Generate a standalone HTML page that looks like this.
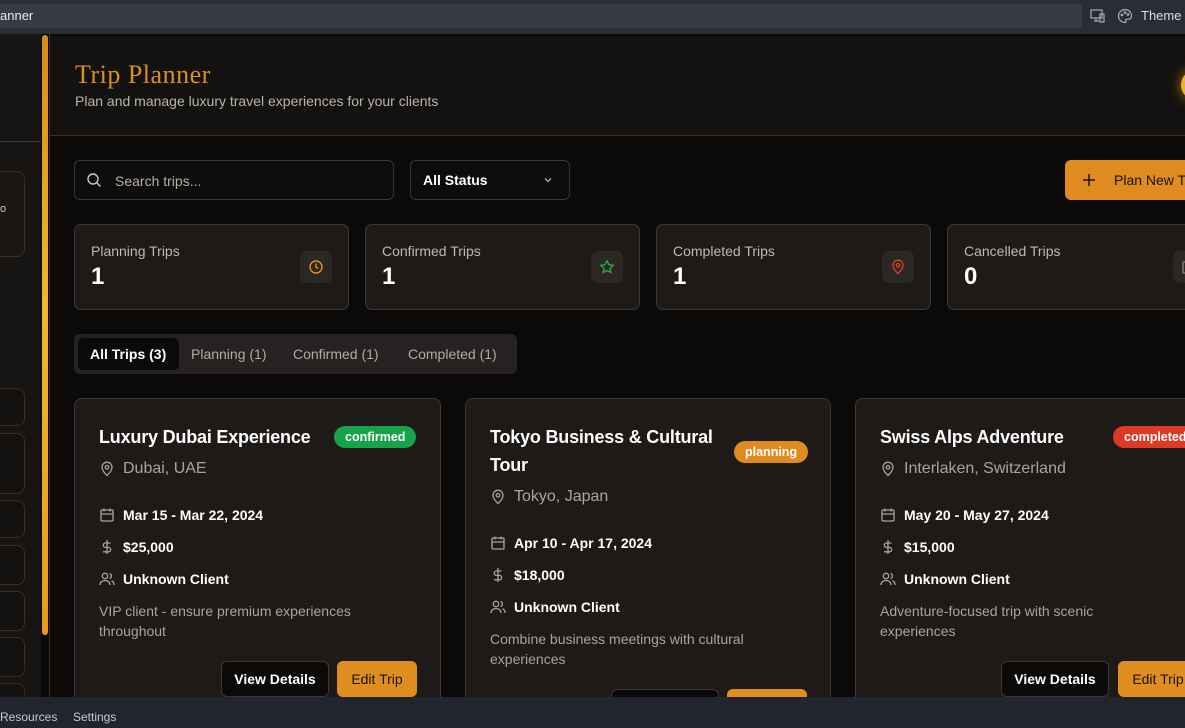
<!DOCTYPE html>
<html><head><meta charset="utf-8"><style>
*{box-sizing:border-box;margin:0;padding:0}
body{width:1185px;height:728px;overflow:hidden;background:#0b0a09;font-family:"Liberation Sans",Arial,sans-serif;position:relative;color:#fff}
.a{position:absolute;white-space:nowrap}
.topbar{left:0;top:0;width:1185px;height:34px;background:#2a2d35}
.field{left:0;top:4px;width:1082px;height:24px;background:#383b45;border-radius:0 4px 4px 0;font-size:13px;color:#e8e8e8;line-height:24px;padding-left:0}
.side{left:0;top:34px;width:41px;height:663px;background:#171513}
.sb{border:1px solid #3c2e1a;border-left:none;border-radius:0 8px 8px 0;background:#141210;left:0;width:25px}
.scroll{left:42px;top:35px;width:6px;height:600px;border-radius:3px;background:linear-gradient(#d98a1a,#f0b730 45%,#e8981e)}
.main{left:49px;top:34px;width:1136px;height:663px;border-left:1px solid #3a2d1c}
.header{left:50px;top:36px;width:1135px;height:100px;background:#141210;border-bottom:1px solid #3d2f1c}
h1{position:absolute;left:75px;top:60px;font-family:"Liberation Serif",serif;font-weight:normal;font-size:26px;color:#d98f22;letter-spacing:.5px}
.sub{left:75px;top:93px;font-size:14px;color:#b8b3ad}
.box{background:#0d0c0b;border:1px solid #3a3836;border-radius:6px}
.stat{top:224px;width:275px;height:86px;background:#1e1a18;border:1px solid #3a3836;border-radius:7px}
.stat .l{position:absolute;left:16px;top:18px;font-size:14px;color:#bdb8b2}
.stat .n{position:absolute;left:16px;top:38px;font-size:24px;font-weight:bold;color:#fff}
.stat .ic{position:absolute;left:225px;top:26px;width:32px;height:32px;border-radius:7px;background:#2a2725;display:flex;align-items:center;justify-content:center}
.card{top:398px;width:367px;height:320px;background:#1e1a18;border:1px solid #3a3836;border-radius:8px}
.t{position:absolute;left:24px;font-size:18px;font-weight:bold;color:#fff;line-height:28px;letter-spacing:-.2px}
.badge{position:absolute;height:22px;border-radius:11px;font-size:12.5px;font-weight:bold;line-height:22px;padding:0 11px;color:#fff}
.row{position:absolute;left:24px;display:flex;align-items:center;font-size:14px;color:#fff;font-weight:bold}
.row svg{margin-right:8px}
.loc{font-size:16px;color:#a9a49e;font-weight:normal}
.desc{position:absolute;left:24px;font-size:14px;color:#a9a49e;line-height:20px;width:300px;white-space:normal}
.btn{position:absolute;height:36px;border-radius:6px;font-size:14px;line-height:34px;text-align:center}
.vd{background:#0b0a09;border:1px solid #3a3836;color:#fff;font-weight:bold;width:108px}
.et{background:#e08e1f;color:#1a1208;width:80px;border:1px solid #e08e1f}
.bottom{left:0;top:697px;width:1185px;height:31px;background:#22252d;font-size:12px;color:#c8cad0}
</style></head><body>
<div class="a topbar"></div>
<div class="a field">anner</div>
<svg class="a" style="left:1090px;top:8px" width="16" height="16" viewBox="0 0 16 16" fill="none" stroke="#aab" stroke-width="1.2"><rect x="1" y="2" width="11" height="8"/><path d="M4 13h5M6 10v3"/><rect x="10" y="6" width="4" height="8"/></svg>
<svg class="a" style="left:1117px;top:8px" width="16" height="16" viewBox="0 0 16 16" fill="none" stroke="#aab" stroke-width="1.2"><path d="M8 1.5a6.5 6.5 0 1 0 0 13c1 0 1.3-.8.8-1.5-.6-.8 0-1.8 1-1.8h1.7A3 3 0 0 0 14.5 8 6.5 6.5 0 0 0 8 1.5z"/><circle cx="5" cy="7" r=".8"/><circle cx="8" cy="4.5" r=".8"/><circle cx="11" cy="6.5" r=".8"/></svg>
<div class="a" style="left:1141px;top:8px;font-size:13px;color:#dde">Theme</div>
<div class="a side"></div>
<div class="a" style="left:0;top:141px;width:41px;height:1px;background:#3a3836"></div>
<div class="a sb" style="top:171px;height:86px;background:#1a1714"></div>
<div class="a" style="left:0;top:203px;font-size:11px;color:#ccc">o</div>
<div class="a sb" style="top:388px;height:38px"></div>
<div class="a sb" style="top:433px;height:61px"></div>
<div class="a sb" style="top:500px;height:38px"></div>
<div class="a sb" style="top:545px;height:40px"></div>
<div class="a sb" style="top:591px;height:40px"></div>
<div class="a sb" style="top:637px;height:40px"></div>
<div class="a sb" style="top:683px;height:20px;border-color:#5a1c1c"></div>
<div class="a scroll"></div>
<div class="a main"></div>
<div class="a header"></div>
<h1>Trip Planner</h1>
<div class="a sub">Plan and manage luxury travel experiences for your clients</div>
<div class="a" style="left:1181px;top:70px;width:30px;height:30px;border-radius:50%;background:#f0b22e;box-shadow:0 0 12px #b07010"></div>

<div class="a box" style="left:74px;top:160px;width:320px;height:40px"></div>
<svg class="a" style="left:86px;top:172px" width="16" height="16" viewBox="0 0 16 16" fill="none" stroke="#ccc" stroke-width="1.4"><circle cx="7" cy="7" r="5"/><path d="M11 11l3.5 3.5"/></svg>
<div class="a" style="left:115px;top:173px;font-size:14px;color:#b5b0aa">Search trips...</div>
<div class="a box" style="left:410px;top:160px;width:160px;height:40px"></div>
<div class="a" style="left:423px;top:172px;font-size:14px;color:#fff;font-weight:bold">All Status</div>
<svg class="a" style="left:542px;top:174px" width="12" height="12" viewBox="0 0 12 12" fill="none" stroke="#aaa" stroke-width="1.3"><path d="M3 4.5l3 3 3-3"/></svg>
<div class="a" style="left:1065px;top:160px;width:130px;height:40px;border-radius:6px;background:#df8b1f"></div>
<svg class="a" style="left:1082px;top:173px" width="14" height="14" viewBox="0 0 14 14" fill="none" stroke="#1a1208" stroke-width="1.5"><path d="M7 1v12M1 7h12"/></svg>
<div class="a" style="left:1114px;top:172px;font-size:14px;color:#1a1208">Plan New Trip</div>

<div class="a stat" style="left:74px"><div class="l">Planning Trips</div><div class="n">1</div><div class="ic"><svg width="16" height="16" viewBox="0 0 16 16" fill="none" stroke="#e0921f" stroke-width="1.4"><circle cx="8" cy="8" r="6"/><path d="M8 4.5V8l2.2 1.5"/></svg></div></div>
<div class="a stat" style="left:365px"><div class="l">Confirmed Trips</div><div class="n">1</div><div class="ic"><svg width="16" height="16" viewBox="0 0 16 16" fill="none" stroke="#22b04a" stroke-width="1.3"><path d="M8 1.8l1.9 3.9 4.2.6-3 3 .7 4.2L8 11.5l-3.8 2 .7-4.2-3-3 4.2-.6z"/></svg></div></div>
<div class="a stat" style="left:656px"><div class="l">Completed Trips</div><div class="n">1</div><div class="ic"><svg width="16" height="16" viewBox="0 0 16 16" fill="none" stroke="#e0402a" stroke-width="1.3"><path d="M8 14.5s5-4.5 5-8.3a5 5 0 0 0-10 0c0 3.8 5 8.3 5 8.3z"/><circle cx="8" cy="6.3" r="1.8"/></svg></div></div>
<div class="a stat" style="left:947px"><div class="l">Cancelled Trips</div><div class="n">0</div><div class="ic"><svg width="16" height="16" viewBox="0 0 16 16" fill="none" stroke="#888" stroke-width="1.3"><rect x="2" y="3" width="12" height="11" rx="1"/></svg></div></div>

<div class="a" style="left:74px;top:334px;width:443px;height:40px;border-radius:6px;background:#262221"></div>
<div class="a" style="left:78px;top:338px;width:101px;height:32px;border-radius:5px;background:#0b0a09"></div>
<div class="a" style="left:90px;top:346px;font-size:14px;color:#fff;font-weight:bold">All Trips (3)</div>
<div class="a" style="left:191px;top:346px;font-size:14px;color:#b0aba5">Planning (1)</div>
<div class="a" style="left:293px;top:346px;font-size:14px;color:#b0aba5">Confirmed (1)</div>
<div class="a" style="left:408px;top:346px;font-size:14px;color:#b0aba5">Completed (1)</div>

<!-- card 1 -->
<div class="a card" style="left:74px">
<div class="t" style="top:24px">Luxury Dubai Experience</div>
<div class="badge" style="left:259px;top:27px;background:#16a34a">confirmed</div>
<div class="row loc" style="top:61px"><svg width="16" height="16" viewBox="0 0 16 16" fill="none" stroke="#a9a49e" stroke-width="1.3"><path d="M8 14.5s5-4.5 5-8.3a5 5 0 0 0-10 0c0 3.8 5 8.3 5 8.3z"/><circle cx="8" cy="6.3" r="1.8"/></svg>Dubai, UAE</div>
<div class="row" style="top:108px"><svg width="16" height="16" viewBox="0 0 16 16" fill="none" stroke="#a9a49e" stroke-width="1.3"><rect x="2" y="3" width="12" height="11" rx="1"/><path d="M2 7h12M5 1.5v3M11 1.5v3"/></svg>Mar 15 - Mar 22, 2024</div>
<div class="row" style="top:140px"><svg width="16" height="16" viewBox="0 0 16 16" fill="none" stroke="#a9a49e" stroke-width="1.3"><path d="M8 1v14M11.5 4H6.5a2.2 2.2 0 0 0 0 4.4h3a2.2 2.2 0 0 1 0 4.4H4"/></svg>$25,000</div>
<div class="row" style="top:172px"><svg width="16" height="16" viewBox="0 0 16 16" fill="none" stroke="#a9a49e" stroke-width="1.3"><circle cx="6" cy="5" r="2.7"/><path d="M1 14c0-2.8 2.2-4.5 5-4.5s5 1.7 5 4.5M10.5 2.5a2.6 2.6 0 0 1 0 5M12.5 9.8c1.5.5 2.5 2 2.5 4.2"/></svg>Unknown Client</div>
<div class="desc" style="top:202px;width:290px">VIP client - ensure premium experiences throughout</div>
<div class="btn vd" style="left:146px;top:262px">View Details</div>
<div class="btn et" style="left:262px;top:262px">Edit Trip</div>
</div>

<!-- card 2 -->
<div class="a card" style="left:465px;width:366px">
<div class="t" style="top:24px;width:240px;white-space:normal">Tokyo Business &amp; Cultural Tour</div>
<div class="badge" style="left:268px;top:42px;background:#df8b1f">planning</div>
<div class="row loc" style="top:89px"><svg width="16" height="16" viewBox="0 0 16 16" fill="none" stroke="#a9a49e" stroke-width="1.3"><path d="M8 14.5s5-4.5 5-8.3a5 5 0 0 0-10 0c0 3.8 5 8.3 5 8.3z"/><circle cx="8" cy="6.3" r="1.8"/></svg>Tokyo, Japan</div>
<div class="row" style="top:136px"><svg width="16" height="16" viewBox="0 0 16 16" fill="none" stroke="#a9a49e" stroke-width="1.3"><rect x="2" y="3" width="12" height="11" rx="1"/><path d="M2 7h12M5 1.5v3M11 1.5v3"/></svg>Apr 10 - Apr 17, 2024</div>
<div class="row" style="top:168px"><svg width="16" height="16" viewBox="0 0 16 16" fill="none" stroke="#a9a49e" stroke-width="1.3"><path d="M8 1v14M11.5 4H6.5a2.2 2.2 0 0 0 0 4.4h3a2.2 2.2 0 0 1 0 4.4H4"/></svg>$18,000</div>
<div class="row" style="top:200px"><svg width="16" height="16" viewBox="0 0 16 16" fill="none" stroke="#a9a49e" stroke-width="1.3"><circle cx="6" cy="5" r="2.7"/><path d="M1 14c0-2.8 2.2-4.5 5-4.5s5 1.7 5 4.5M10.5 2.5a2.6 2.6 0 0 1 0 5M12.5 9.8c1.5.5 2.5 2 2.5 4.2"/></svg>Unknown Client</div>
<div class="desc" style="top:230px;width:290px">Combine business meetings with cultural experiences</div>
<div class="btn vd" style="left:145px;top:290px">View Details</div>
<div class="btn et" style="left:261px;top:290px">Edit Trip</div>
</div>

<!-- card 3 -->
<div class="a card" style="left:855px">
<div class="t" style="top:24px">Swiss Alps Adventure</div>
<div class="badge" style="left:257px;top:27px;background:#dc3a26">completed</div>
<div class="row loc" style="top:61px"><svg width="16" height="16" viewBox="0 0 16 16" fill="none" stroke="#a9a49e" stroke-width="1.3"><path d="M8 14.5s5-4.5 5-8.3a5 5 0 0 0-10 0c0 3.8 5 8.3 5 8.3z"/><circle cx="8" cy="6.3" r="1.8"/></svg>Interlaken, Switzerland</div>
<div class="row" style="top:108px"><svg width="16" height="16" viewBox="0 0 16 16" fill="none" stroke="#a9a49e" stroke-width="1.3"><rect x="2" y="3" width="12" height="11" rx="1"/><path d="M2 7h12M5 1.5v3M11 1.5v3"/></svg>May 20 - May 27, 2024</div>
<div class="row" style="top:140px"><svg width="16" height="16" viewBox="0 0 16 16" fill="none" stroke="#a9a49e" stroke-width="1.3"><path d="M8 1v14M11.5 4H6.5a2.2 2.2 0 0 0 0 4.4h3a2.2 2.2 0 0 1 0 4.4H4"/></svg>$15,000</div>
<div class="row" style="top:172px"><svg width="16" height="16" viewBox="0 0 16 16" fill="none" stroke="#a9a49e" stroke-width="1.3"><circle cx="6" cy="5" r="2.7"/><path d="M1 14c0-2.8 2.2-4.5 5-4.5s5 1.7 5 4.5M10.5 2.5a2.6 2.6 0 0 1 0 5M12.5 9.8c1.5.5 2.5 2 2.5 4.2"/></svg>Unknown Client</div>
<div class="desc" style="top:202px;width:265px">Adventure-focused trip with scenic experiences</div>
<div class="btn vd" style="left:145px;top:262px">View Details</div>
<div class="btn et" style="left:262px;top:262px">Edit Trip</div>
</div>

<div class="a bottom"><span class="a" style="left:0;top:13px">Resources</span><span class="a" style="left:73px;top:13px">Settings</span></div>
</body></html>
